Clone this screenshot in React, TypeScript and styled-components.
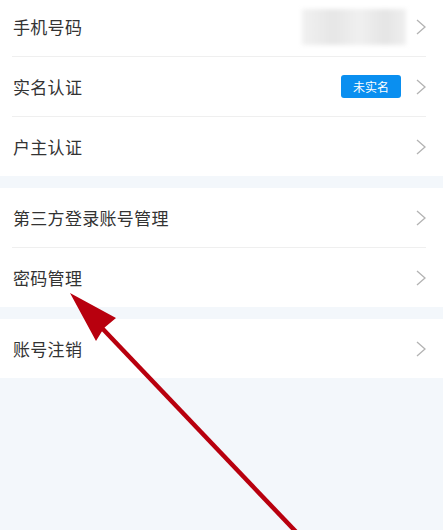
import React from 'react'
import styled, { createGlobalStyle } from 'styled-components'

const GlobalStyle = createGlobalStyle`
  html, body {
    margin: 0;
    padding: 0;
    background: #f3f7fb;
  }
  body {
    font-family: "Noto Sans CJK SC", "Noto Sans", sans-serif;
    overflow: hidden;
  }
`

interface RowData {
  label: string
  extra?: 'phone' | 'badge'
}

const groups: RowData[][] = [
  [{ label: '手机号码', extra: 'phone' }, { label: '实名认证', extra: 'badge' }, { label: '户主认证' }],
  [{ label: '第三方登录账号管理' }, { label: '密码管理' }],
  [{ label: '账号注销' }],
]

function Chevron() {
  return (
    <ChevronIcon width='10' height='16' viewBox='0 0 10 16'>
      <polyline points='1,1 9,8 1,15' fill='none' stroke='#b3b3b3' strokeWidth='1.3' />
    </ChevronIcon>
  )
}

function RedArrow() {
  return (
    <ArrowLayer width='443' height='530' viewBox='0 0 443 530'>
      <line x1='100' y1='326' x2='300' y2='536' stroke='#b8000e' strokeWidth='4.5' />
      <polygon points='70,293 116,318 104,328 96,341' fill='#b8000e' />
    </ArrowLayer>
  )
}

export default function App() {
  return (
    <>
      <GlobalStyle />
      <Page>
        {groups.map((rows, gi) => (
          <Group key={gi} $first={gi === 0}>
            {rows.map((row, ri) => (
              <Row key={row.label} $divider={ri > 0}>
                <Label>{row.label}</Label>
                <Right>
                  {row.extra === 'phone' && <BlurredPhone />}
                  {row.extra === 'badge' && <Badge>未实名</Badge>}
                  <Chevron />
                </Right>
              </Row>
            ))}
          </Group>
        ))}
        <RedArrow />
      </Page>
    </>
  )
}

const Page = styled.div`
  position: relative;
  width: 443px;
  height: 530px;
  overflow: hidden;
  background: #f3f7fb;
`

const Group = styled.div<{ $first?: boolean }>`
  background: #ffffff;
  margin-top: ${(p) => (p.$first ? '-3px' : '12px')};
`

const Row = styled.div<{ $divider?: boolean }>`
  display: flex;
  align-items: center;
  justify-content: space-between;
  height: 59px;
  margin: 0 17px 0 12px;
  border-top: ${(p) => (p.$divider ? '1px solid #efefef' : 'none')};
`

const Label = styled.span`
  font-size: 17px;
  color: #333333;
  padding-left: 1px;
  letter-spacing: 0.3px;
`

const Right = styled.div`
  display: flex;
  align-items: center;
`

const BlurredPhone = styled.div`
  width: 104px;
  height: 36px;
  margin-right: 10px;
  background: linear-gradient(90deg, #f1f1f1 0%, #e6e6e6 30%, #f0f0f0 55%, #e5e5e5 80%, #efefef 100%);
  filter: blur(2px);
`

const Badge = styled.span`
  display: inline-flex;
  align-items: center;
  justify-content: center;
  width: 60px;
  height: 23px;
  margin-right: 15px;
  border-radius: 3px;
  background: #0a8ff0;
  color: #ffffff;
  font-size: 12px;
`

const ChevronIcon = styled.svg`
  display: block;
`

const ArrowLayer = styled.svg`
  position: absolute;
  left: 0;
  top: 0;
  pointer-events: none;
`
